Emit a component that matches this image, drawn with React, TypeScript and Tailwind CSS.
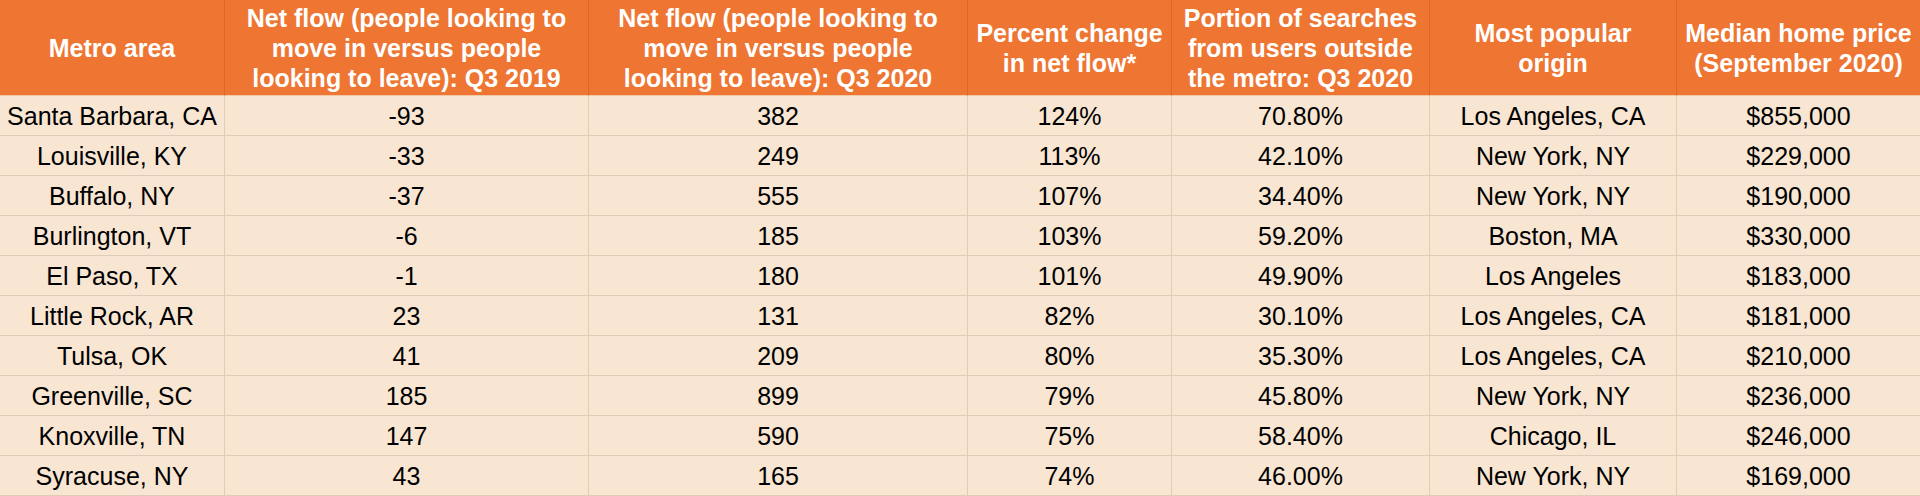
import React from 'react';

const headers = [
  'Metro area',
  'Net flow (people looking to move in versus people looking to leave): Q3 2019',
  'Net flow (people looking to move in versus people looking to leave): Q3 2020',
  'Percent change in net flow*',
  'Portion of searches from users outside the metro: Q3 2020',
  'Most popular origin',
  'Median home price (September 2020)',
];

const rows: string[][] = [
  ['Santa Barbara, CA', '-93', '382', '124%', '70.80%', 'Los Angeles, CA', '$855,000'],
  ['Louisville, KY', '-33', '249', '113%', '42.10%', 'New York, NY', '$229,000'],
  ['Buffalo, NY', '-37', '555', '107%', '34.40%', 'New York, NY', '$190,000'],
  ['Burlington, VT', '-6', '185', '103%', '59.20%', 'Boston, MA', '$330,000'],
  ['El Paso, TX', '-1', '180', '101%', '49.90%', 'Los Angeles', '$183,000'],
  ['Little Rock, AR', '23', '131', '82%', '30.10%', 'Los Angeles, CA', '$181,000'],
  ['Tulsa, OK', '41', '209', '80%', '35.30%', 'Los Angeles, CA', '$210,000'],
  ['Greenville, SC', '185', '899', '79%', '45.80%', 'New York, NY', '$236,000'],
  ['Knoxville, TN', '147', '590', '75%', '58.40%', 'Chicago, IL', '$246,000'],
  ['Syracuse, NY', '43', '165', '74%', '46.00%', 'New York, NY', '$169,000'],
];

export default function App() {
  return (
    <div
      className="w-[1920px] h-[496px] overflow-hidden bg-[#f8e6d3] text-black"
      style={{ fontFamily: '"Liberation Sans", Arial, sans-serif' }}
    >
      <div className="grid grid-cols-[225px_364px_379px_204px_258px_247px_1fr]">
        {/* header */}
        {headers.map((h, i) => (
          <div
            key={h}
            className={
              'h-[96px] bg-[#ee7532] text-white font-bold text-[25px] leading-[30px] flex items-center justify-center text-center px-2 border-b border-[#f0c9a8] ' +
              (i < headers.length - 1 ? 'border-r border-r-[#d8692c]' : '')
            }
          >
            {h}
          </div>
        ))}

        {/* body */}
        {rows.map((r) =>
          r.map((c, i) => (
            <div
              key={r[0] + i}
              className={
                'h-[40px] pt-[2px] flex items-center justify-center text-[25px] leading-none whitespace-nowrap border-b border-[#dfcdb7] ' +
                (i < r.length - 1 ? 'border-r' : '')
              }
            >
              {c}
            </div>
          ))
        )}
      </div>
    </div>
  );
}
